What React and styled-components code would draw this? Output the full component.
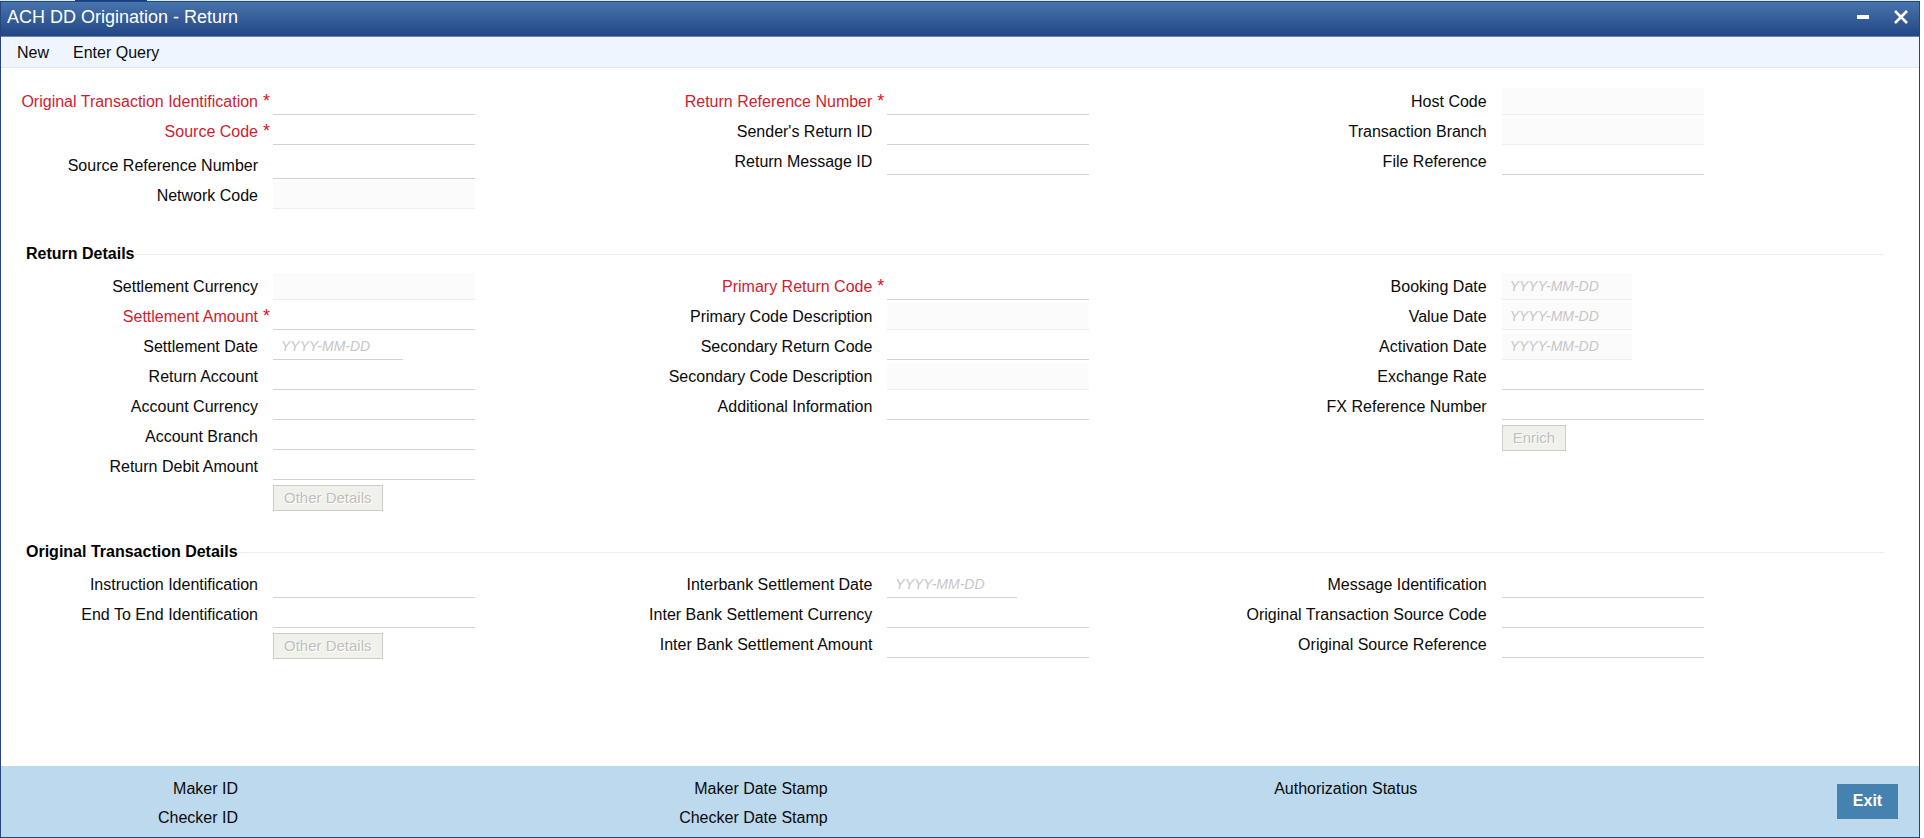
import React, { useId } from 'react';
import styled, { createGlobalStyle } from 'styled-components';

const GlobalStyle = createGlobalStyle`
  * { box-sizing: border-box; }
  body {
    margin: 0;
    background: #ffffff;
    color: #0a0a0a;
    font: 16px/20px "Liberation Sans", Arial, sans-serif;
  }
  button, input { font-family: inherit; }
`;

const Page = styled.div`
  display: flex;
  flex-direction: column;
  min-height: 100vh;
  padding-right: 4px;
`;

const TabStrip = styled.div`
  height: 1px;
  background: #d3edf8;

  &::before {
    content: '';
    display: block;
    width: 72px;
    height: 1px;
    margin-left: 75px;
    background: #123f8c;
  }
`;

const Window = styled.main`
  flex: 1;
  display: flex;
  flex-direction: column;
  border: 1px solid #26457f;
`;

const TitleBar = styled.header`
  display: flex;
  align-items: center;
  justify-content: space-between;
  height: 35px;
  padding: 0 11px 4px 6px;
  border-bottom: 1px solid #6d87ac;
  background: linear-gradient(#4874ad, #234685);
  color: #ffffff;
`;

const Title = styled.h1`
  margin: 0;
  font-size: 18px;
  font-weight: 400;
`;

const WindowControls = styled.div`
  display: flex;
  gap: 24px;
`;

const IconButton = styled.button`
  display: flex;
  padding: 0;
  border: 0;
  background: none;
  color: #ffffff;
  cursor: pointer;
`;

const Toolbar = styled.nav`
  display: flex;
  gap: 24px;
  height: 31px;
  padding: 0 16px;
  border-bottom: 1px solid #e4e8ec;
  background: #eef5ff;
`;

const ToolbarButton = styled.button`
  padding: 2px 0 0;
  border: 0;
  background: none;
  color: #0a0a0a;
  font-size: 16px;
  cursor: pointer;
`;

const Form = styled.form`
  flex: 1;
  padding: 20px 35px 0 11px;
`;

const KeyFields = styled.section`
  margin-bottom: 34px;
`;

const DetailSection = styled.section`
  margin-bottom: 30px;
`;

const SectionTitle = styled.h2`
  display: flex;
  align-items: center;
  margin: 0 0 8px 14px;
  font-size: 16px;
  line-height: 22px;
  color: #000000;

  &::after {
    content: '';
    flex: 1;
    height: 1px;
    background: #ececec;
  }
`;

const Columns = styled.div`
  display: grid;
  grid-template-columns: repeat(3, 1fr);
  padding-right: 29px;
`;

const Column = styled.div`
  display: flex;
  flex-direction: column;
  gap: 3px;
`;

const Row = styled.div`
  display: flex;
  height: 27px;
  margin-top: ${(p) => (p.$spaced ? '4px' : '0')};
`;

const Label = styled.label`
  display: flex;
  flex: 0 0 261px;
  justify-content: flex-end;
  line-height: 27px;
  white-space: nowrap;
  color: ${(p) => (p.$required ? '#d01c30' : '#0a0a0a')};
`;

const Marker = styled.span`
  width: 15px;
  padding-left: 5px;
  color: #e0101c;
  font-size: 18px;
`;

const Input = styled.input`
  width: ${(p) => (p.$date ? '130px' : '202px')};
  height: 27px;
  padding: 0 8px;
  border: 0;
  border-bottom: 1px solid #d2d2d2;
  border-radius: 0;
  background: #ffffff;
  font-size: 14px;
  outline: 0;

  &:disabled {
    border-color: #eeeeee;
    background: #fbfbfb;
  }
  &::placeholder {
    color: #c6c6c6;
    font-style: italic;
    opacity: 1;
  }
`;

const ButtonRow = styled.div`
  padding: 2px 0 0 261px;
`;

const FormButton = styled.button`
  display: block;
  height: 26px;
  padding: 0 10px 2px;
  border: 1px solid #cccccc;
  background: #f1f1ec;
  color: #bfbfbf;
  font-size: 15px;
  text-shadow: 1px 1px 0 #ffffff;
`;

const Footer = styled.footer`
  display: flex;
  align-items: center;
  gap: 67px;
  height: 71px;
  padding-right: 21px;
  background: #bdd9ed;
`;

const AuditColumns = styled.div`
  flex: 1;
  display: grid;
  grid-template-columns: repeat(3, 1fr);
  padding-top: 4px;
`;

const AuditColumn = styled.div`
  display: flex;
  flex-direction: column;
  gap: 9px;
  width: 237px;
  text-align: right;
`;

const ExitButton = styled.button`
  width: 61px;
  height: 35px;
  padding: 0 0 2px;
  border: 0;
  background: #4682af;
  color: #ffffff;
  font-size: 16px;
  font-weight: 700;
  cursor: pointer;
`;

function Field({ label, required, disabled, date, spaced }) {
  const id = useId();
  return (
    <Row $spaced={spaced}>
      <Label htmlFor={id} $required={required}>
        {label}
        <Marker>{required ? '*' : ''}</Marker>
      </Label>
      <Input
        id={id}
        type="text"
        $date={date}
        disabled={disabled}
        required={required}
        placeholder={date ? 'YYYY-MM-DD' : undefined}
      />
    </Row>
  );
}

function FieldColumns({ columns }) {
  return (
    <Columns>
      {columns.map(({ fields, action }) => (
        <Column key={fields[0].label}>
          {fields.map((field) => (
            <Field key={field.label} {...field} />
          ))}
          {action && (
            <ButtonRow>
              <FormButton type="button" disabled>{action}</FormButton>
            </ButtonRow>
          )}
        </Column>
      ))}
    </Columns>
  );
}

const keyColumns = [
  {
    fields: [
      { label: 'Original Transaction Identification', required: true },
      { label: 'Source Code', required: true },
      { label: 'Source Reference Number', spaced: true },
      { label: 'Network Code', disabled: true },
    ],
  },
  {
    fields: [
      { label: 'Return Reference Number', required: true },
      { label: "Sender's Return ID" },
      { label: 'Return Message ID' },
    ],
  },
  {
    fields: [
      { label: 'Host Code', disabled: true },
      { label: 'Transaction Branch', disabled: true },
      { label: 'File Reference' },
    ],
  },
];

const returnColumns = [
  {
    fields: [
      { label: 'Settlement Currency', disabled: true },
      { label: 'Settlement Amount', required: true },
      { label: 'Settlement Date', date: true },
      { label: 'Return Account' },
      { label: 'Account Currency' },
      { label: 'Account Branch' },
      { label: 'Return Debit Amount' },
    ],
    action: 'Other Details',
  },
  {
    fields: [
      { label: 'Primary Return Code', required: true },
      { label: 'Primary Code Description', disabled: true },
      { label: 'Secondary Return Code' },
      { label: 'Secondary Code Description', disabled: true },
      { label: 'Additional Information' },
    ],
  },
  {
    fields: [
      { label: 'Booking Date', date: true, disabled: true },
      { label: 'Value Date', date: true, disabled: true },
      { label: 'Activation Date', date: true, disabled: true },
      { label: 'Exchange Rate' },
      { label: 'FX Reference Number' },
    ],
    action: 'Enrich',
  },
];

const originalColumns = [
  {
    fields: [
      { label: 'Instruction Identification' },
      { label: 'End To End Identification' },
    ],
    action: 'Other Details',
  },
  {
    fields: [
      { label: 'Interbank Settlement Date', date: true },
      { label: 'Inter Bank Settlement Currency' },
      { label: 'Inter Bank Settlement Amount' },
    ],
  },
  {
    fields: [
      { label: 'Message Identification' },
      { label: 'Original Transaction Source Code' },
      { label: 'Original Source Reference' },
    ],
  },
];

const auditColumns = [
  ['Maker ID', 'Checker ID'],
  ['Maker Date Stamp', 'Checker Date Stamp'],
  ['Authorization Status'],
];

export default function App() {
  return (
    <Page>
      <GlobalStyle />
      <TabStrip />
      <Window>
        <TitleBar>
          <Title>ACH DD Origination - Return</Title>
          <WindowControls>
            <IconButton type="button" aria-label="Minimize">
              <svg width="14" height="14" viewBox="0 0 14 14">
                <path d="M1 7h12" stroke="currentColor" strokeWidth="4" />
              </svg>
            </IconButton>
            <IconButton type="button" aria-label="Close">
              <svg width="14" height="14" viewBox="0 0 14 14">
                <path d="M1 1l12 12M13 1L1 13" stroke="currentColor" strokeWidth="2.6" />
              </svg>
            </IconButton>
          </WindowControls>
        </TitleBar>
        <Toolbar>
          <ToolbarButton type="button">New</ToolbarButton>
          <ToolbarButton type="button">Enter Query</ToolbarButton>
        </Toolbar>
        <Form>
          <KeyFields>
            <FieldColumns columns={keyColumns} />
          </KeyFields>
          <DetailSection>
            <SectionTitle>Return Details</SectionTitle>
            <FieldColumns columns={returnColumns} />
          </DetailSection>
          <DetailSection>
            <SectionTitle>Original Transaction Details</SectionTitle>
            <FieldColumns columns={originalColumns} />
          </DetailSection>
        </Form>
        <Footer>
          <AuditColumns>
            {auditColumns.map((labels) => (
              <AuditColumn key={labels[0]}>
                {labels.map((label) => (
                  <span key={label}>{label}</span>
                ))}
              </AuditColumn>
            ))}
          </AuditColumns>
          <ExitButton type="button">Exit</ExitButton>
        </Footer>
      </Window>
    </Page>
  );
}
